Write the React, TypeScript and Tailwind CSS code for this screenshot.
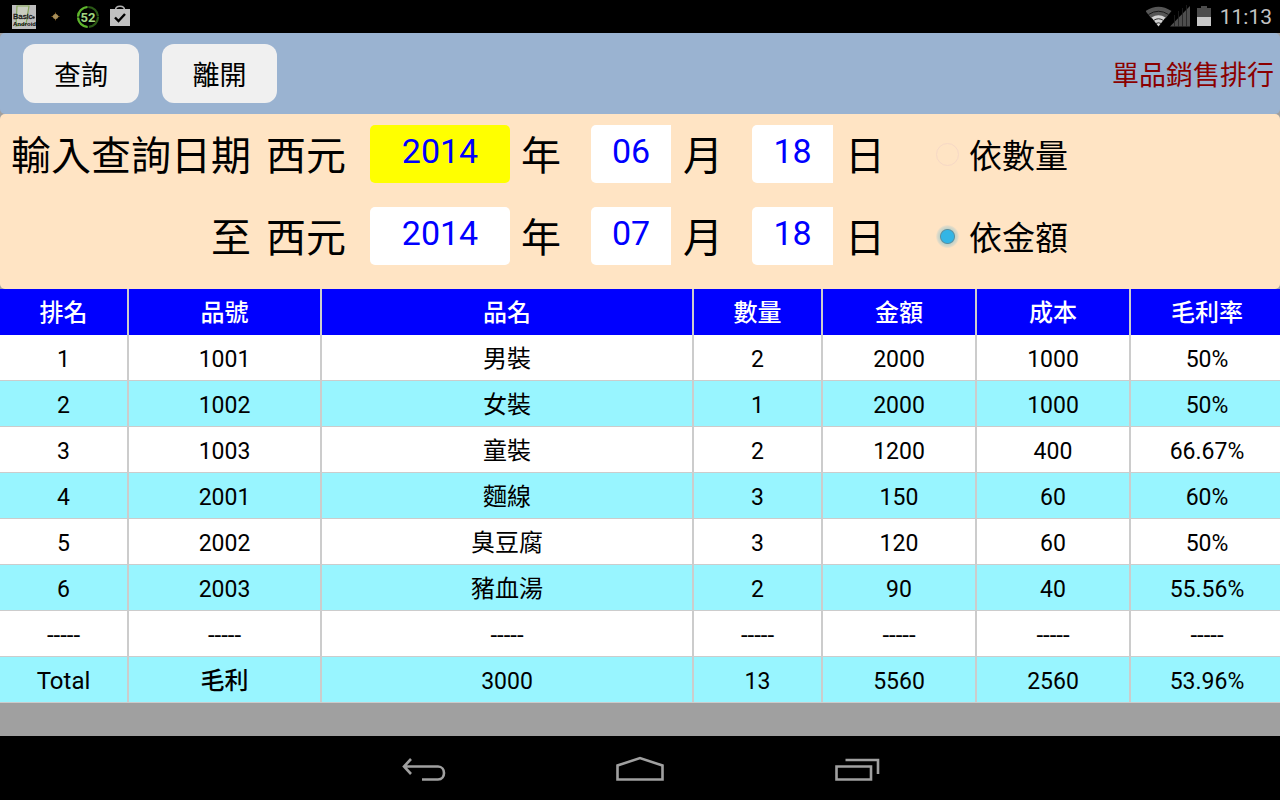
import React from "react";

const columns = ["排名", "品號", "品名", "數量", "金額", "成本", "毛利率"];

const rows = [
  ["1", "1001", "男裝", "2", "2000", "1000", "50%"],
  ["2", "1002", "女裝", "1", "2000", "1000", "50%"],
  ["3", "1003", "童裝", "2", "1200", "400", "66.67%"],
  ["4", "2001", "麵線", "3", "150", "60", "60%"],
  ["5", "2002", "臭豆腐", "3", "120", "60", "50%"],
  ["6", "2003", "豬血湯", "2", "90", "40", "55.56%"],
  ["-----", "-----", "-----", "-----", "-----", "-----", "-----"],
  ["Total", "毛利", "3000", "13", "5560", "2560", "53.96%"],
];

function StatusBar() {
  return (
    <div className="flex h-[33px] items-center justify-between bg-black pr-2 pl-3">
      <div className="flex items-center">
        <svg className="h-6 w-6" viewBox="0 0 24 24" aria-hidden="true">
          <rect width="24" height="24" fill="#bdbdbd" />
          <path d="M5 1H17L14 19L4 21Z" fill="#c9cdc0" stroke="#86a658" strokeWidth="1.2" />
          <text x="1" y="14" fontSize="8" fontFamily="Liberation Sans, sans-serif" fill="#1a1a1a" stroke="#1a1a1a" strokeWidth="0.3">Basic</text>
          <circle cx="21.500" cy="12.500" r="1.300" fill="#222" />
          <text x="1" y="21" fontSize="6" fontWeight="700" fontFamily="Liberation Sans, sans-serif" fill="#000">Android</text>
        </svg>
        <svg className="ml-[15px] h-[9px] w-[9px]" viewBox="0 0 9 9" aria-hidden="true">
          <path d="M4.500 0L5.500 3L9 4.500L5.500 6L4.500 9L3.500 6L0 4.500L3.500 3Z" fill="#8a6424" />
          <circle cx="4.500" cy="4.500" r="2.500" fill="#a8905c" />
        </svg>
        <svg className="ml-4 h-6 w-6" viewBox="0 0 24 24" aria-hidden="true">
          <circle cx="12" cy="12" r="10" fill="none" stroke="#2b5a16" strokeWidth="2.2" strokeDasharray="14.7 1" />
          <path d="M11.500 22A10 10 0 0 1 2 12.500M2 11.500A10 10 0 0 1 11.500 2" fill="none" stroke="#5fb52c" strokeWidth="2.2" />
          <text x="12" y="16.500" textAnchor="middle" fontSize="13" fontWeight="700" fontFamily="Roboto, sans-serif" fill="#a0d880">52</text>
        </svg>
        <svg className="ml-[9px] h-6 w-[22px]" viewBox="0 0 22 24" aria-hidden="true">
          <path d="M6.500 5C6.500 0 15.500 0 15.500 5" fill="none" stroke="#b4b4b4" strokeWidth="1.5" />
          <rect x="1" y="4" width="20" height="17" fill="#c0c0c0" />
          <path d="M6 12.500L9.500 16L16 9" fill="none" stroke="#000" strokeWidth="2.4" />
        </svg>
      </div>
      <div className="flex items-center">
        <svg className="h-6 w-[66px]" viewBox="0 0 66 24" aria-hidden="true">
          <path d="M-0.500 6Q12.500 -2.500 25.500 6L19.500 13.500Q12.500 9 5.500 13.500Z" fill="#565656" />
          <path d="M2.500 9.500Q12.500 3 22.500 9.500" fill="none" stroke="#111" strokeWidth="0.9" />
          <path d="M5.500 12.500Q12.500 8 19.500 12.500L12.500 21.500Z" fill="#d4d4d4" />
          <path d="M7.500 15.500Q12.500 12 17.500 15.500M10 18.500Q12.500 17 15 18.500" fill="none" stroke="#222" strokeWidth="0.9" />
          <path d="M24 21.500L44 1V21.500Z" fill="#4e4e4e" />
          <path d="M28.500 10V22M32.500 6V22M36.500 3V22M40.500 0V22" stroke="#222" strokeWidth="0.8" />
          <path d="M51 3h4V1h6v2h4v9H51z" fill="#4c4c4c" />
          <rect x="51" y="12" width="14" height="9" fill="#c8c8c8" />
        </svg>
        <span className="ml-2 pt-px text-[21px] leading-6 text-[#c4c4c4]">11:13</span>
      </div>
    </div>
  );
}

const fieldClass = "h-[58px] pb-[6px] text-center text-[34px] text-[#0000ff] outline-none";
const unitClass = "w-10 pt-[6px]";

type DateRowProps = {
  id: string;
  lead: string;
  date: [string, string, string];
  active?: boolean;
  option: string;
  checked?: boolean;
};

function DateRow({ id, lead, date, active, option, checked }: DateRowProps) {
  return (
    <div className="flex h-[58px] items-center text-[40px] leading-[52px] whitespace-nowrap">
      <span className="w-[240px] pt-[6px] text-right">{lead}</span>
      <label htmlFor={`${id}-year`} className="ml-[15px] w-20 pt-[6px]">西元</label>
      <input id={`${id}-year`} defaultValue={date[0]} className={`${fieldClass} ml-6 w-[140px] rounded-[5px] ${active ? "bg-[#ffff00]" : "bg-white"}`} />
      <label htmlFor={`${id}-year`} className={`${unitClass} ml-[11px]`}>年</label>
      <input id={`${id}-month`} defaultValue={date[1]} className={`${fieldClass} ml-[30px] w-20 rounded-l-[5px] bg-white`} />
      <label htmlFor={`${id}-month`} className={`${unitClass} ml-3`}>月</label>
      <input id={`${id}-day`} defaultValue={date[2]} className={`${fieldClass} ml-[29px] w-[81px] rounded-l-[5px] bg-white`} />
      <label htmlFor={`${id}-day`} className={`${unitClass} ml-3`}>日</label>
      <label className="ml-[51px] flex items-center gap-[10px] text-[33px]">
        <input
          type="radio"
          name="rank-by"
          defaultChecked={checked}
          className="h-[23px] w-[23px] appearance-none rounded-full border border-[#f6d8c6] checked:border-0 checked:bg-[radial-gradient(circle,#33b5e5_0_6px,#5a8fa0_7px,#c4d3c8_8px,#dcd9c8_10px,#ffe4c4_12px)]"
        />
        <span className="pt-[6px]">{option}</span>
      </label>
    </div>
  );
}

function NavBar() {
  return (
    <nav className="flex h-16 items-center justify-center gap-[168px] bg-black">
      <button type="button" aria-label="Back">
        <svg className="h-8 w-12" viewBox="0 0 48 32" fill="none" stroke="#a0a0a0" strokeWidth="2.6">
          <path d="M11 7L4 14.500L11 22M4 14.500H38C46 14.500 46 27.500 38 27.500H22" />
        </svg>
      </button>
      <button type="button" aria-label="Home">
        <svg className="h-8 w-12" viewBox="0 0 48 32" fill="none" stroke="#a0a0a0" strokeWidth="2.6">
          <path d="M1.500 27.500V13.500L24 6L46.500 13.500V27.500Z" />
        </svg>
      </button>
      <button type="button" aria-label="Recent apps">
        <svg className="h-8 w-12" viewBox="0 0 48 32" fill="none" stroke="#a0a0a0" strokeWidth="2.6">
          <path d="M4.500 14.500H39V27.500H4.500ZM13.500 8H46V22" />
        </svg>
      </button>
    </nav>
  );
}

export default function App() {
  return (
    <div className="flex min-h-screen flex-col overflow-hidden bg-[#a0a0a0] font-[Roboto,'Noto_Sans_CJK_TC',sans-serif] text-black">
      <StatusBar />
      <header className="flex h-[81px] items-center justify-between rounded-[5px] bg-[#9ab3d1] pr-[6px] pl-[23px] text-[27px]">
        <div className="flex gap-[23px]">
          <button type="button" className="h-[59px] w-[116px] rounded-[12px] bg-[#f0f0f0] pt-[5px]">查詢</button>
          <button type="button" className="h-[59px] w-[115px] rounded-[12px] bg-[#f0f0f0] pt-[5px]">離開</button>
        </div>
        <h1 className="pt-[5px] text-[#8b0000]">單品銷售排行</h1>
      </header>
      <form className="flex flex-col gap-6 rounded-[5px] bg-[#ffe4c4] pt-[11px] pb-6 pl-[11px]">
        <DateRow id="from" lead="輸入查詢日期" date={["2014", "06", "18"]} active option="依數量" />
        <DateRow id="to" lead="至" date={["2014", "07", "18"]} option="依金額" checked />
      </form>
      <table className="w-full table-fixed border-separate border-spacing-0 text-center text-[24px] leading-[41px]">
        <colgroup>
          <col className="w-[129px]" />
          <col className="w-[193px]" />
          <col className="w-[372px]" />
          <col className="w-[129px]" />
          <col className="w-[154px]" />
          <col className="w-[154px]" />
          <col className="w-[149px]" />
        </colgroup>
        <thead>
          <tr className="h-[46px] bg-[#0000ff] text-white">
            {columns.map((name) => (
              <th key={name} className="border-r-2 border-[#cccccc] p-0 pt-[3px] font-medium last:border-r-0 last:pl-[3px]">{name}</th>
            ))}
          </tr>
        </thead>
        <tbody>
          {rows.map((row) => (
            <tr key={row[0]} className="h-[46px] bg-white even:bg-[#98f5ff]">
              {row.map((cell, i) => (
                <td
                  key={i}
                  className={`border-r-2 border-b border-[#cccccc] p-0 pt-1 last:border-r-0 last:pl-[3px] ${/^\d/.test(cell) ? "text-[23px]" : ""} ${cell === "毛利" ? "font-medium" : ""}`}
                >
                  {cell}
                </td>
              ))}
            </tr>
          ))}
        </tbody>
      </table>
      <div className="min-h-8 flex-1" />
      <NavBar />
    </div>
  );
}
